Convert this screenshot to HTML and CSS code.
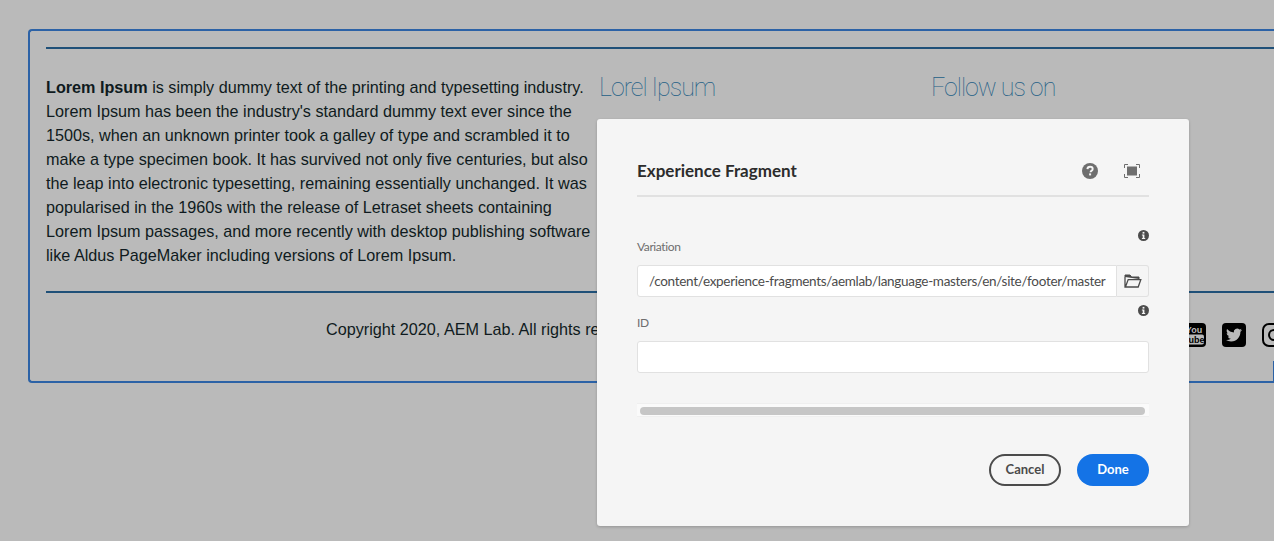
FILE: index.html
```html
<!DOCTYPE html>
<html lang="en">
<head>
<meta charset="utf-8">
<title>Experience Fragment</title>
<link rel="stylesheet" href="styles.css">
</head>
<body>
<div class="page">
  <footer class="frame">
    <hr class="rule">
    <div class="columns">
      <p class="about"><strong>Lorem Ipsum</strong> is simply dummy text of the printing and typesetting industry. Lorem Ipsum has been the industry's standard dummy text ever since the 1500s, when an unknown printer took a galley of type and scrambled it to make a type specimen book. It has survived not only five centuries, but also the leap into electronic typesetting, remaining essentially unchanged. It was popularised in the 1960s with the release of Letraset sheets containing Lorem Ipsum passages, and more recently with desktop publishing software like Aldus PageMaker including versions of Lorem Ipsum.</p>
      <h2 class="heading">Lorel Ipsum</h2>
      <h2 class="heading">Follow us on</h2>
    </div>
    <hr class="rule rule-low">
    <div class="legal">
      <p class="copyright">Copyright 2020, AEM Lab. All rights reserved.</p>
      <div class="social">
        <svg class="social-icon" viewBox="0 0 24 24" aria-hidden="true">
          <rect width="24" height="24" rx="4" fill="#000"/>
          <text x="12" y="10" class="yt-you">You</text>
          <rect x="2" y="11.5" width="20" height="10" rx="2" fill="#bababa"/>
          <text x="12" y="20" class="yt-tube">Tube</text>
        </svg>
        <svg class="social-icon" viewBox="0 0 24 24" aria-hidden="true">
          <rect width="24" height="24" rx="4" fill="#000"/>
          <path transform="translate(4 4) scale(.667)" fill="#bababa" d="M23.953 4.57a10 10 0 01-2.825.775 4.958 4.958 0 002.163-2.723c-.951.555-2.005.959-3.127 1.184a4.92 4.92 0 00-8.384 4.482C7.69 8.095 4.067 6.13 1.64 3.162a4.822 4.822 0 00-.666 2.475c0 1.71.87 3.213 2.188 4.096a4.904 4.904 0 01-2.228-.616v.06a4.923 4.923 0 003.946 4.827 4.996 4.996 0 01-2.212.085 4.936 4.936 0 004.604 3.417 9.867 9.867 0 01-6.102 2.105c-.39 0-.779-.023-1.17-.067a13.995 13.995 0 007.557 2.209c9.053 0 13.998-7.496 13.998-13.985 0-.21 0-.42-.015-.63A9.935 9.935 0 0024 4.59z"/>
        </svg>
        <svg class="social-icon" viewBox="0 0 24 24" aria-hidden="true">
          <rect x="1" y="1" width="22" height="22" rx="6" fill="none" stroke="#000" stroke-width="2"/>
          <circle cx="12" cy="12" r="5" fill="none" stroke="#000" stroke-width="2"/>
          <circle cx="18" cy="6" r="1.4" fill="#000"/>
        </svg>
      </div>
    </div>
  </footer>
</div>

<section class="dialog" role="dialog" aria-label="Experience Fragment">
  <header class="dialog-head">
    <h1 class="dialog-title">Experience Fragment</h1>
    <svg class="icon-help" viewBox="0 0 16 16" aria-hidden="true">
      <circle cx="8" cy="8" r="8" fill="#6e6e6e"/>
      <path d="M5.4 6.1C5.5 4.6 6.6 3.7 8.1 3.7c1.5 0 2.6.9 2.6 2.2 0 1-.6 1.5-1.3 2-.6.4-.8.7-.8 1.3" fill="none" stroke="#f5f5f5" stroke-width="1.9"/>
      <rect x="7.1" y="10.4" width="2" height="2" fill="#f5f5f5"/>
    </svg>
    <svg class="icon-full" viewBox="0 0 16 14" aria-hidden="true">
      <path d="M.5 4V.5H4M12 .5h3.5V4M15.5 10v3.5H12M4 13.5H.5V10" fill="none" stroke="#6e6e6e"/>
      <rect x="3" y="2.5" width="10" height="9" fill="#6e6e6e"/>
    </svg>
  </header>

  <div class="field-info">
    <svg class="icon-info" viewBox="0 0 11 11" aria-hidden="true">
      <circle cx="5.5" cy="5.5" r="5.5" fill="#4b4b4b"/>
      <rect x="4.6" y="1.9" width="1.8" height="1.7" fill="#f5f5f5"/>
      <path d="M3.9 4.5h2.5v3.4h.8v1H3.9v-1h.8V5.5h-.8z" fill="#f5f5f5"/>
    </svg>
  </div>
  <label class="field-label">Variation</label>
  <div class="path-field">
    <div class="input input-path">/content/experience-fragments/aemlab/language-masters/en/site/footer/master</div>
    <div class="picker">
      <svg class="icon-folder" viewBox="0 0 18 14" aria-hidden="true">
        <path d="M1 3V1h5l1.6 2H15v2" fill="#4b4b4b" stroke="#4b4b4b" stroke-width="1"/>
        <path d="M1 3v10h13.2l2.6-7.4H4.2L1.6 12.5" fill="none" stroke="#4b4b4b" stroke-width="1.3"/>
      </svg>
    </div>
  </div>
  <div class="field-info field-info-second">
    <svg class="icon-info" viewBox="0 0 11 11" aria-hidden="true">
      <circle cx="5.5" cy="5.5" r="5.5" fill="#4b4b4b"/>
      <rect x="4.6" y="1.9" width="1.8" height="1.7" fill="#f5f5f5"/>
      <path d="M3.9 4.5h2.5v3.4h.8v1H3.9v-1h.8V5.5h-.8z" fill="#f5f5f5"/>
    </svg>
  </div>
  <label class="field-label">ID</label>
  <div class="input input-id"></div>

  <div class="scroll-track"><div class="scroll-thumb"></div></div>

  <div class="actions">
    <button class="btn btn-cancel" type="button">Cancel</button>
    <button class="btn btn-done" type="button">Done</button>
  </div>
</section>
</body>
</html>
```
FILE: styles.css
```css
html, body {
  margin: 0;
  height: 100%;
  overflow: hidden;
  background: #bababa;
}

body {
  position: relative;
  font-family: "Liberation Sans", Arial, sans-serif;
  font-size: 16.2px;
  line-height: 24px;
  color: #0f1a20;
}

.page {
  padding: 29px 0 0 28px;
  width: 1300px;
  box-sizing: border-box;
}

.frame {
  position: relative;
  box-sizing: border-box;
  width: 1246px;
  height: 354px;
  margin: 0;
  padding: 16px 0 0 16px;
  border: 2px solid #2c62a6;
  border-right: 0;
  border-radius: 4px 0 0 4px;
}

.frame::after {
  content: "";
  position: absolute;
  right: 0;
  bottom: 0;
  width: 1px;
  height: 20px;
  background: #2c62a6;
}

.rule {
  margin: 0;
  height: 2px;
  border: 0;
  background: #1f5078;
}

.rule-low {
  margin-top: 24px;
}

.columns {
  display: grid;
  grid-template-columns: 553px 332px 1fr;
  padding-top: 26px;
}

.about {
  margin: 0;
  width: 550px;
}

.heading {
  margin: 1px 0 0;
  font-family: Roboto, sans-serif;
  font-weight: 100;
  font-size: 25px;
  letter-spacing: -1px;
  line-height: 24px;
  color: #235f86;
}

.legal {
  display: flex;
  align-items: flex-start;
  padding: 24px 0 0 280px;
}

.copyright {
  margin: 0;
  white-space: nowrap;
  width: 856px;
  flex: none;
}

.social {
  display: flex;
  gap: 16px;
  flex: none;
  margin-top: 6px;
}

.social-icon {
  display: block;
  width: 24px;
  height: 24px;
  flex: none;
}

.yt-you,
.yt-tube {
  font-family: "Liberation Sans", sans-serif;
  font-weight: 700;
  font-size: 9px;
  text-anchor: middle;
  fill: #bababa;
}

.yt-tube {
  fill: #000;
}

.dialog {
  position: absolute;
  left: 597px;
  top: 119px;
  box-sizing: border-box;
  width: 592px;
  height: 407px;
  padding: 0 40px;
  background: #f5f5f5;
  border-radius: 3px;
  box-shadow: 0 1px 3px rgba(0, 0, 0, .2);
  font-family: Lato, sans-serif;
  color: #4b4b4b;
}

.dialog-head {
  display: flex;
  align-items: center;
  height: 78px;
  box-sizing: border-box;
  border-bottom: 2px solid #e1e1e1;
  padding-top: 28px;
  padding-right: 9px;
}

.dialog-title {
  margin: 0 auto 0 0;
  font-size: 17px;
  font-weight: 700;
  line-height: 24px;
  color: #2c2c2c;
}

.icon-help {
  width: 16px;
  height: 16px;
  margin-right: 26px;
}

.icon-full {
  width: 16px;
  height: 14px;
}

.field-info {
  display: flex;
  justify-content: flex-end;
  padding-top: 33px;
  height: 11px;
}

.field-info-second {
  padding-top: 8px;
  height: 12px;
}

.icon-info {
  width: 11px;
  height: 11px;
}

.field-label {
  display: block;
  height: 12px;
  font-size: 12px;
  letter-spacing: -.4px;
  line-height: 12px;
  color: #6e6e6e;
}

.path-field {
  display: flex;
  margin-top: 12px;
  height: 32px;
}

.input {
  box-sizing: border-box;
  height: 32px;
  background: #fff;
  border: 1px solid #e1e1e1;
  border-radius: 3px;
}

.input-path {
  width: 480px;
  padding: 0 11px;
  font-size: 13.5px;
  letter-spacing: -.3px;
  line-height: 30px;
  white-space: nowrap;
  border-radius: 3px 0 0 3px;
  overflow: hidden;
}

.picker {
  box-sizing: border-box;
  display: flex;
  align-items: center;
  justify-content: center;
  width: 32px;
  height: 32px;
  border: 1px solid #e1e1e1;
  border-left: 0;
  border-radius: 0 3px 3px 0;
}

.icon-folder {
  width: 18px;
  height: 14px;
}

.input-id {
  margin-top: 12px;
}

.scroll-track {
  box-sizing: border-box;
  margin-top: 30px;
  height: 14px;
  padding: 3px 4px 3px 3px;
  border: 1px solid #efefef;
  border-width: 1px 0;
  background: #fafafa;
}

.scroll-thumb {
  height: 8px;
  border-radius: 4px;
  background: #c6c6c6;
}

.actions {
  display: flex;
  justify-content: flex-end;
  gap: 16px;
  margin-top: 37px;
}

.btn {
  box-sizing: border-box;
  width: 72px;
  height: 32px;
  border-radius: 16px;
  font-family: Lato, sans-serif;
  font-size: 13px;
  font-weight: 700;
  padding: 0 0 2px;
}

.btn-cancel {
  background: transparent;
  border: 2px solid #4b4b4b;
  color: #4b4b4b;
}

.btn-done {
  background: #1473e6;
  border: 0;
  color: #fff;
}
```
